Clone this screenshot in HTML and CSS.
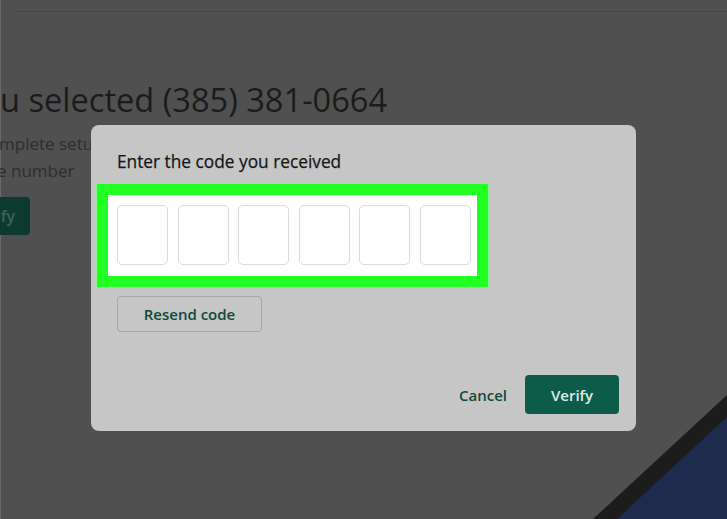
FILE: index.html
```html
<!DOCTYPE html>
<html lang="en">
<head>
<meta charset="utf-8">
<title>Enter the code you received</title>
<link rel="stylesheet" href="styles.css">
</head>
<body>
<div class="page">
  <div class="topbar"></div>
  <main class="content">
    <h1 class="headline">u selected (385) 381-0664</h1>
    <p class="desc">mplete setup</p>
    <p class="desc desc-second">e number</p>
    <div class="bg-button">fy</div>
  </main>
</div>

<svg class="corner" width="134" height="124" viewBox="0 0 134 124" aria-hidden="true">
  <polygon points="0,124 134,0 134,124" fill="#1c1c1d"/>
  <polygon points="24,124 134,22 134,124" fill="#1f2b4e"/>
</svg>

<div class="dialog" role="dialog">
  <h2 class="dialog-title">Enter the code you received</h2>
  <div class="highlight">
    <div class="code-row">
      <div class="code-box"></div>
      <div class="code-box"></div>
      <div class="code-box"></div>
      <div class="code-box"></div>
      <div class="code-box"></div>
      <div class="code-box"></div>
    </div>
  </div>
  <button class="resend">Resend code</button>
  <div class="actions">
    <button class="cancel">Cancel</button>
    <button class="verify">Verify</button>
  </div>
</div>
</body>
</html>
```
FILE: styles.css
```css
* { box-sizing: border-box; }

html, body {
  margin: 0;
  padding: 0;
}

body {
  width: 727px;
  height: 519px;
  background: #505050;
  font-family: "Open Sans", "Noto Sans", sans-serif;
  overflow: hidden;
  position: relative;
  box-shadow: inset 1px 0 0 #6a6a6a;
}

.page {
  display: flex;
  flex-direction: column;
}

.topbar {
  height: 12px;
  margin-left: 15px;
  border-bottom: 1px solid #474747;
}

.content {
  display: flex;
  flex-direction: column;
  align-items: flex-start;
}

.headline {
  margin: 68px 0 0 0;
  font-size: 32.6px;
  font-weight: 400;
  line-height: 40px;
  color: #1b1b1b;
  letter-spacing: 0;
}

.desc {
  margin: 10px 0 0 -1px;
  font-size: 17px;
  line-height: 27px;
  color: #2e2e2e;
}

.desc-second {
  margin-top: 0;
  margin-left: -3px;
}

.bg-button {
  margin-top: 13px;
  margin-left: -10px;
  width: 40px;
  height: 38px;
  border-radius: 4px;
  background: #0e392e;
  color: #3b6457;
  font-size: 16px;
  font-weight: 600;
  display: flex;
  align-items: center;
  justify-content: flex-end;
  padding-right: 15px;
}

.corner {
  position: absolute;
  right: 0;
  bottom: 0;
  display: block;
}

.dialog {
  position: absolute;
  left: 91px;
  top: 125px;
  width: 545px;
  height: 306px;
  background: #c6c6c6;
  border-radius: 8px;
  padding: 27px 17px 17px 26px;
  display: flex;
  flex-direction: column;
  align-items: flex-start;
}

.dialog-title {
  margin: 0;
  font-size: 17.3px;
  line-height: 20px;
  font-weight: 500;
  color: #161616;
  -webkit-text-stroke: 0.25px #161616;
}

.highlight {
  margin-top: 12px;
  margin-left: -20px;
  border: 11px solid #22ff22;
  outline: 1px solid #8ef08e;
  background: #ffffff;
  padding: 10px 6px 11px 9px;
}

.code-row {
  display: flex;
  gap: 9.6px;
}

.code-box {
  width: 51px;
  height: 60px;
  border: 1px solid #dcdcdc;
  border-radius: 5px;
  background: #fff;
}

.resend {
  margin-top: 9px;
  width: 145px;
  height: 36px;
  background: #c6c6c6;
  border: 1px solid #a6a6a6;
  border-radius: 4px;
  font-family: inherit;
  font-size: 15px;
  font-weight: 600;
  color: #0d4a3b;
  padding: 0;
}

.actions {
  margin-top: 43px;
  align-self: flex-end;
  display: flex;
  align-items: center;
  gap: 18px;
}

.cancel {
  background: none;
  border: none;
  padding: 0;
  font-family: inherit;
  font-size: 15px;
  font-weight: 600;
  color: #0d4a3b;
}

.verify {
  width: 94px;
  height: 39px;
  background: #0d5c4a;
  border: none;
  border-radius: 4px;
  font-family: inherit;
  font-size: 15px;
  font-weight: 600;
  color: #d9ece6;
  padding: 0;
}
```
